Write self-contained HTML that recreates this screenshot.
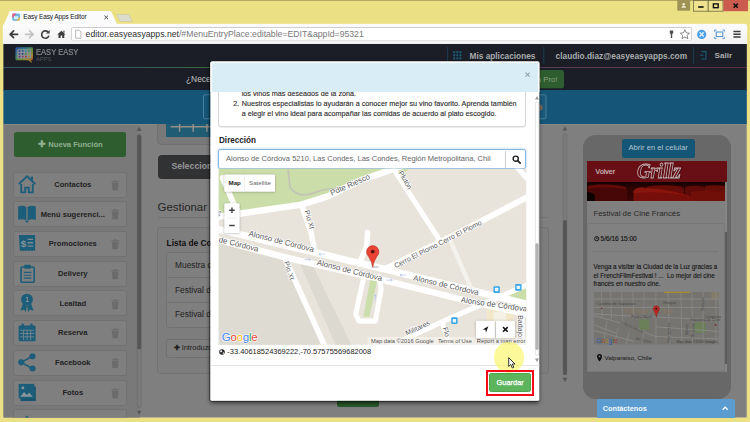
<!DOCTYPE html>
<html lang="es">
<head>
<meta charset="utf-8">
<title>Easy Easy Apps Editor</title>
<style>
*{box-sizing:border-box;margin:0;padding:0}
html,body{width:750px;height:422px;overflow:hidden;background:#ece084;font-family:"Liberation Sans",sans-serif;-webkit-font-smoothing:antialiased}
.abs,#win *{position:absolute}
#win{position:relative;width:750px;height:422px;overflow:hidden;background:#ece084}
#win svg{overflow:visible}
.t{white-space:nowrap;line-height:1}
/* chrome */
#tab{left:9.4px;top:11.4px;width:101.6px;height:13.6px;background:#fbfbfb;border-radius:1.5px 1.5px 0 0}
#tabl{left:3.6px;top:11.4px;width:0;height:0;border-left:6px solid transparent;border-bottom:13.6px solid #fbfbfb}
#tabr{left:110.8px;top:11.4px;width:0;height:0;border-right:6px solid transparent;border-bottom:13.6px solid #fbfbfb}
#toolbar{left:3.4px;top:24.4px;width:743.4px;height:20px;background:linear-gradient(#fcfcfc,#f1f1f1);border-radius:2px 2px 0 0;box-shadow:0 0 0 .6px #f4eaa4}
#url{left:71px;top:27px;width:620.5px;height:14px;background:#fff;border:1px solid #d2d2d2;border-top:1.200px solid #cdcdcd;border-bottom-color:#e4e4e4;border-radius:2px}
#frameL{left:3.4px;top:44px;width:.6px;height:373px;background:#f0e7a0}
#frameR{left:746px;top:44px;width:.6px;height:373px;background:#f0e7a0}
#frameB{left:3.4px;top:417.4px;width:743.2px;height:.6px;background:#f0e7a0}
/* page */
#page{left:0;top:0;width:750px;height:422px;clip-path:inset(44px 3.3px 4.5px 3.5px);background:#7f7f7f}
#hdr1{left:0;top:44px;width:750px;height:23px;background:#1b1e26}
#hdrline{left:0;top:66.500px;width:750px;height:1.300px;background:linear-gradient(90deg,#34586c 0,#34586c 14%,#3a6b3c 28%,#6b6a2a 50%,#5c3c54 72%,#5c3652 86%,#5e2c40 100%)}
#hdr2{left:0;top:67.8px;width:750px;height:23px;background:#1b1e26}
#band{left:0;top:90.2px;width:750px;height:33.4px;background:#155678}
.hd{color:#a9abae;font-weight:bold;font-size:8px}
.sb{left:12.8px;width:114.6px;height:26.1px;background:#7f7f7f;border:1px solid #727272;border-radius:3px}
.sb .t{left:24px;width:70px;text-align:center;top:8.4px;font-size:7.6px;font-weight:bold;color:#222}
.sb .ic{left:3.7px;top:1.1px;width:20px;height:20px}
.sb .tr{left:97.5px;top:7.3px;width:8.4px;height:10.6px}
/* modal */
#modal{left:0;top:0;width:750px;height:422px;clip-path:inset(61.6px 210.6px 21.200px 210.4px round 1.500px);background:#fff}
#mshadow{left:210.4px;top:61.6px;width:329px;height:339.200px;border-radius:2.500px;box-shadow:0 1.500px 4px rgba(0,0,0,.6),0 0 0 .8px rgba(0,0,0,.42)}
#mhead{left:210px;top:61px;width:330px;height:30.7px;background:#d9edf7}
</style>
</head>
<body>
<div id="win">
  <!-- window chrome -->
  <div id="toolbar"></div>
  <div id="tabl"></div><div id="tab"></div><div id="tabr"></div>
  <div id="url"></div>
  <div id="frameL"></div><div id="frameR"></div><div id="frameB"></div>
  
  <div class="abs" style="left:0;top:0;width:750px;height:1px;background:#b5a95f"></div>
  <!-- new tab button -->
  <svg class="abs" style="left:0;top:0" width="750" height="46" viewBox="0 0 750 46">
    <path d="M116.5 14.5 h12.5 l3.5 7 h-12.5 z" fill="#dcdccd" stroke="#c9c49a" stroke-width=".6"/>
    <!-- favicon -->
    <rect x="12.3" y="13.6" width="7.6" height="7.2" rx="1.2" fill="#6fb4e0"/>
    <path d="M12.3 14.8 q0 -1.2 1.2 -1.2 h3 l-4.2 4.6z" fill="#e45c8c"/>
    <path d="M19.9 17 v2.6 q0 1.2 -1.2 1.2 h-2.2z" fill="#f2b53b"/>
    <path d="M14 16.2h4.2v3H14z" fill="#fff" opacity=".75"/>
    <!-- tab close -->
    <path d="M104.4 15.6 l3.6 3.6 M108 15.6 l-3.6 3.6" stroke="#4a4a4a" stroke-width="1" fill="none"/>
    <!-- back -->
    <path d="M17.6 34.3 h-7.4 M13.6 30.9 l-3.5 3.4 l3.5 3.4" stroke="#3c3c3c" stroke-width="1.7" fill="none" stroke-linecap="round" stroke-linejoin="round"/>
    <!-- forward -->
    <path d="M25.6 34.3 h7.4 M29.6 30.9 l3.5 3.4 l-3.5 3.4" stroke="#c3c3c3" stroke-width="1.7" fill="none" stroke-linecap="round" stroke-linejoin="round"/>
    <!-- reload -->
    <path d="M48 32 a3.7 3.7 0 1 0 0.9 3.6" stroke="#3c3c3c" stroke-width="1.6" fill="none"/>
    <path d="M49.6 30 v3.6 h-3.6z" fill="#3c3c3c"/>
    <!-- home -->
    <path d="M57.3 34.6 l4.1 -3.9 l4.1 3.9 h-1.2 v3.4 h-2.1 v-2.4 h-1.6 v2.4 h-2.1 v-3.4z" fill="#3c3c3c"/>
    <rect x="63.4" y="30.7" width="1.1" height="2" fill="#3c3c3c"/>
    <!-- page icon -->
    <path d="M75.6 30.2 h3.6 l1.8 1.8 v6.2 h-5.4z" fill="#fff" stroke="#a7a7a7" stroke-width=".8"/>
    <!-- key -->
    <path d="M669.8 30.6 h3.4 v2.6 l-1 .9 v3.8 h-1.4 v-3.8 l-1 -.9z" fill="#4d4d4d"/>
    <!-- star -->
    <path d="M684.9 29.8 l1.4 3 l3.2 .4 l-2.4 2.2 l.7 3.2 l-2.9 -1.6 l-2.9 1.6 l.7 -3.2 l-2.4 -2.2 l3.2 -.4z" fill="#fff" stroke="#6b6b6b" stroke-width=".8" stroke-linejoin="round"/>
    <!-- blue ext -->
    <circle cx="701.7" cy="34.4" r="4.6" fill="#4a9ee6"/>
    <path d="M699.6 32.3 l4.2 4.2 M703.8 32.3 l-4.2 4.2" stroke="#d9ecfb" stroke-width="1.6"/>
    <!-- capture -->
    <rect x="716.2" y="32" width="6.6" height="4.6" fill="#fff" stroke="#4a8fd0" stroke-width="1"/>
    <path d="M714.6 31.6 v-1.6 h1.8 M722.6 30 h1.8 v1.6 M724.4 37 v1.6 h-1.8 M716.4 38.6 h-1.8 v-1.6" stroke="#4a8fd0" stroke-width=".9" fill="none"/>
    <!-- menu -->
    <path d="M733.4 31.6 h7.2 M733.4 34.3 h7.2 M733.4 37 h7.2" stroke="#3c3c3c" stroke-width="1.5"/>
    <!-- window buttons -->
    <rect x="677.3" y="0" width="12.8" height="10.7" fill="#9d9355"/>
    <circle cx="683.7" cy="4.3" r="1.3" fill="#f1ead0"/>
    <path d="M681.4 7.7 q0 -2 2.3 -2 q2.3 0 2.3 2z" fill="#f1ead0"/>
    <rect x="693.6" y="0.4" width="14.6" height="10.8" fill="#efe28f" stroke="#6f6a3c" stroke-width=".8"/>
    <rect x="708.2" y="0.4" width="14.8" height="10.8" fill="#efe28f" stroke="#6f6a3c" stroke-width=".8"/>
    <rect x="723.4" y="0" width="24.6" height="11.2" fill="#cb5a4f"/>
    <rect x="698.2" y="6.2" width="5.4" height="1.6" fill="#111"/>
    <rect x="713.4" y="3.9" width="4.8" height="3.8" fill="none" stroke="#111" stroke-width="1.4"/>
    <path d="M733.6 3.6 l4.200 4.200 M737.800 3.6 l-4.200 4.200" stroke="#111" stroke-width="1.500"/>
  </svg>
  <div class="abs t" style="left:23.3px;top:13.6px;font-size:6.5px;letter-spacing:-.12px;color:#151515">Easy Easy Apps Editor</div>
  <div class="abs t" style="left:85.6px;top:29.6px;font-size:8.67px;color:#787878"><span style="position:static;color:#2e2e2e">editor.easyeasyapps.net</span>/#MenuEntryPlace:editable=EDIT&amp;appId=95321</div>
  <!--CHROME-->
  <div id="page">
    <div id="hdr1"></div><div id="hdrline"></div><div id="hdr2"></div>

    <!-- header row 1 -->
    <svg class="abs" style="left:0;top:0" width="750" height="125" viewBox="0 0 750 125">
      <defs><linearGradient id="lg" x1="0" y1="0" x2="1" y2="1"><stop offset="0" stop-color="#2f4a9a"/><stop offset=".3" stop-color="#2f7a8a"/><stop offset=".55" stop-color="#5a8a3a"/><stop offset=".8" stop-color="#a08a2a"/><stop offset="1" stop-color="#a0402a"/></linearGradient></defs>
      <rect x="15.400" y="47.300" width="17.600" height="12.900" rx="1.400" fill="url(#lg)"/>
      <path d="M27.600 60 l4.400 3 l-1 -3.200z" fill="#9a7a2a"/>
      <rect x="17.200" y="49.200" width="14" height="9.200" rx=".6" fill="#888c93"/>
      <g>
        <circle cx="19.500" cy="51" r=".9" fill="#27408a"/><circle cx="22.700" cy="51" r=".9" fill="#1f5fa0"/><circle cx="25.900" cy="51" r=".9" fill="#1f8a9a"/><circle cx="29.100" cy="51" r=".9" fill="#2a8a4a"/>
        <circle cx="19.500" cy="53.800" r=".9" fill="#3a2f8a"/><circle cx="22.700" cy="53.800" r=".9" fill="#27408a"/><circle cx="25.900" cy="53.800" r=".9" fill="#3a8a3a"/><circle cx="29.100" cy="53.800" r=".9" fill="#9a9a2a"/>
        <circle cx="19.500" cy="56.600" r=".9" fill="#6a2a8a"/><circle cx="22.700" cy="56.600" r=".9" fill="#9a2a5a"/><circle cx="25.900" cy="56.600" r=".9" fill="#b02a2a"/><circle cx="29.100" cy="56.600" r=".9" fill="#b0802a"/>
      </g>
      <path d="M447.6 47 v17 M543.8 47 v17 M693.4 47 v17" stroke="#1d3b4e" stroke-width="1"/>
      <g fill="#1c5d7a">
        <rect x="453.2" y="51.2" width="2" height="2"/><rect x="456.3" y="51.2" width="2" height="2"/><rect x="459.4" y="51.2" width="2" height="2"/>
        <rect x="453.2" y="54.3" width="2" height="2"/><rect x="456.3" y="54.3" width="2" height="2"/><rect x="459.4" y="54.3" width="2" height="2"/>
        <rect x="453.2" y="57.4" width="2" height="2"/><rect x="456.3" y="57.4" width="2" height="2"/><rect x="459.4" y="57.4" width="2" height="2"/>
      </g>
      <path d="M701.6 51.6 h4.4 v7.4 h-4.4" fill="none" stroke="#1c5d7a" stroke-width="1.1"/>
      <path d="M700 55.3 h3.6" stroke="#1c5d7a" stroke-width="1.1"/>
      <!-- pro button -->
      <rect x="520" y="70" width="44" height="18.2" rx="2.2" fill="#2e5e30"/>
      <!-- band widgets -->
      <rect x="203.5" y="95.5" width="80" height="22" fill="none" stroke="#3f7793" stroke-width="1"/>
      <rect x="500" y="95.5" width="46" height="22" rx="1.5" fill="#1a5a7c" stroke="#3f7793" stroke-width="1"/>
      <circle cx="539.5" cy="106.5" r="3.2" fill="#6a6f74"/>
    </svg>
    <div class="t" style="left:36px;top:48.100px;font-size:8.500px;color:#8b8c8f;-webkit-text-stroke:.2px #8b8c8f;transform:scaleX(.89);transform-origin:0 0">EASY EASY</div>
    <div class="t" style="left:36px;top:57.300px;font-size:5.800px;color:#4e5157">APPS</div>
    <div class="t hd" style="left:469.5px;top:51.7px;font-size:8.3px">Mis aplicaciones</div>
    <div class="t hd" style="left:555.6px;top:51.7px;font-size:8.32px">claudio.diaz@easyeasyapps.com</div>
    <div class="t hd" style="left:714.5px;top:51.7px;font-size:8.1px">Salir</div>
    <div class="t" style="left:186px;top:75.2px;font-size:8.4px;color:#c4c4c4">¿Necesitas más? ¡Pásate a</div>
    <div class="t" style="left:536.700px;top:75.600px;font-size:7.800px;color:#84a07c">a Pro!</div>

    <!-- sidebar -->
    <div style="left:0;top:123.600px;width:140.300px;height:300px;background:#797979"></div>
    <div style="left:0;top:123.500px;width:750px;height:.7px;background:#8c8684"></div>
    <div style="left:13.8px;top:132.2px;width:112.4px;height:24.6px;background:#2e5e30;border-radius:2.5px"></div>
    <div class="t" style="left:38.2px;top:141.2px;font-size:7.6px;font-weight:bold;color:#8fb08f"><span style="position:static;font-size:9px;line-height:0">✚</span> Nueva Función</div>
    <div class="sb" style="top:171.5px"><svg class="ic" viewBox="0 0 17 17"><path d="M1.5 8.6 L8.5 2 L15.5 8.6" fill="none" stroke="#1c5d7a" stroke-width="1.7"/><path d="M3.6 8.4 v7.2 h3.4 v-4 h3 v4 h3.4 v-7.2" fill="none" stroke="#1c5d7a" stroke-width="1.6"/><rect x="11.6" y="2.2" width="2" height="3.4" fill="#1c5d7a"/></svg><div class="t">Contactos</div><svg class="tr" viewBox="0 0 8 10"><path d="M.9 2.7 h6.2 l-.5 7 h-5.2z" fill="#6b6b6b"/><rect x=".3" y="1.2" width="7.4" height="1.1" fill="#6b6b6b"/><rect x="2.8" y=".2" width="2.4" height="1.2" fill="#6b6b6b"/></svg></div>
    <div class="sb" style="top:201.2px"><svg class="ic" viewBox="0 0 17 17"><path d="M1 3 q3.6 -1.6 7 0.4 v11.4 q-3.4 -1.8 -7 -0.4z M16 3 q-3.6 -1.6 -7 0.4 v11.4 q3.4 -1.8 7 -0.4z" fill="#1c5d7a"/><path d="M6.6 15 l1.9 2 l1.9 -2z" fill="#1c5d7a"/></svg><div class="t">Menú sugerenci...</div><svg class="tr" viewBox="0 0 8 10"><path d="M.9 2.7 h6.2 l-.5 7 h-5.2z" fill="#6b6b6b"/><rect x=".3" y="1.2" width="7.4" height="1.1" fill="#6b6b6b"/><rect x="2.8" y=".2" width="2.4" height="1.2" fill="#6b6b6b"/></svg></div>
    <div class="sb" style="top:231.0px"><svg class="ic" viewBox="0 0 17 17"><path d="M1.6 1.6 h13.8 v14 l-1.3 -1 l-1.3 1 l-1.3 -1 l-1.3 1 l-1.3 -1 l-1.3 1 l-1.3 -1 l-1.3 1 l-1.3 -1 l-1.2 1z" fill="#1c5d7a"/><path d="M9 5.4 h4.6 M9 8.3 h4.6 M9 11.2 h4.6" stroke="#7e8a90" stroke-width="1.1"/><text x="5.6" y="11.6" font-size="8.4" font-weight="bold" fill="#8a959a" text-anchor="middle" font-family="Liberation Sans,sans-serif" style="position:static">$</text></svg><div class="t">Promociones</div><svg class="tr" viewBox="0 0 8 10"><path d="M.9 2.7 h6.2 l-.5 7 h-5.2z" fill="#6b6b6b"/><rect x=".3" y="1.2" width="7.4" height="1.1" fill="#6b6b6b"/><rect x="2.8" y=".2" width="2.4" height="1.2" fill="#6b6b6b"/></svg></div>
    <div class="sb" style="top:260.7px"><svg class="ic" viewBox="0 0 17 17"><rect x="3.4" y="3.4" width="11.2" height="13" rx="1.2" fill="none" stroke="#1c5d7a" stroke-width="1.4"/><rect x="6.2" y="1.4" width="5.6" height="3.4" rx=".8" fill="#1c5d7a"/><path d="M5.8 8 h6.4 M5.8 10.4 h6.4 M5.8 12.8 h6.4" stroke="#1c5d7a" stroke-width="1"/></svg><div class="t">Delivery</div><svg class="tr" viewBox="0 0 8 10"><path d="M.9 2.7 h6.2 l-.5 7 h-5.2z" fill="#6b6b6b"/><rect x=".3" y="1.2" width="7.4" height="1.1" fill="#6b6b6b"/><rect x="2.8" y=".2" width="2.4" height="1.2" fill="#6b6b6b"/></svg></div>
    <div class="sb" style="top:290.4px"><svg class="ic" viewBox="0 0 17 17"><circle cx="8.5" cy="6.4" r="5" fill="#1c5d7a"/><path d="M5 10 l-2 6 l3 -1.2 l1.4 2.2 l1.1 -5z M12 10 l2 6 l-3 -1.2 l-1.4 2.2 l-1.1 -5z" fill="#1c5d7a"/><text x="8.5" y="8.6" font-size="5.6" font-weight="bold" fill="#88959b" text-anchor="middle" font-family="Liberation Sans,sans-serif" style="position:static">1</text></svg><div class="t">Lealtad</div><svg class="tr" viewBox="0 0 8 10"><path d="M.9 2.7 h6.2 l-.5 7 h-5.2z" fill="#6b6b6b"/><rect x=".3" y="1.2" width="7.4" height="1.1" fill="#6b6b6b"/><rect x="2.8" y=".2" width="2.4" height="1.2" fill="#6b6b6b"/></svg></div>
    <div class="sb" style="top:320.1px"><svg class="ic" viewBox="0 0 17 17"><rect x="1.4" y="3" width="14.4" height="13.4" rx="1" fill="#1c5d7a"/><rect x="4" y="1.2" width="1.8" height="3.4" rx=".6" fill="#1c5d7a"/><rect x="11.4" y="1.2" width="1.8" height="3.4" rx=".6" fill="#1c5d7a"/><path d="M2.6 7 h12 M2.6 9.8 h12 M2.6 12.6 h12 M5.6 7 v8.4 M8.6 7 v8.4 M11.6 7 v8.4" stroke="#7b8a91" stroke-width=".7"/></svg><div class="t">Reserva</div><svg class="tr" viewBox="0 0 8 10"><path d="M.9 2.7 h6.2 l-.5 7 h-5.2z" fill="#6b6b6b"/><rect x=".3" y="1.2" width="7.4" height="1.1" fill="#6b6b6b"/><rect x="2.8" y=".2" width="2.4" height="1.2" fill="#6b6b6b"/></svg></div>
    <div class="sb" style="top:349.9px"><svg class="ic" viewBox="0 0 17 17"><circle cx="3.6" cy="8.8" r="2.6" fill="#1c5d7a"/><circle cx="13.2" cy="3.6" r="2.6" fill="#1c5d7a"/><circle cx="13.2" cy="14" r="2.6" fill="#1c5d7a"/><path d="M3.6 8.8 L13.2 3.6 M3.6 8.8 L13.2 14" stroke="#1c5d7a" stroke-width="1.4"/></svg><div class="t">Facebook</div><svg class="tr" viewBox="0 0 8 10"><path d="M.9 2.7 h6.2 l-.5 7 h-5.2z" fill="#6b6b6b"/><rect x=".3" y="1.2" width="7.4" height="1.1" fill="#6b6b6b"/><rect x="2.8" y=".2" width="2.4" height="1.2" fill="#6b6b6b"/></svg></div>
    <div class="sb" style="top:379.6px"><svg class="ic" viewBox="0 0 17 17"><rect x="3" y="3.8" width="13" height="12.4" fill="#1a5570"/><rect x="1.4" y="1.6" width="13.4" height="12.4" fill="#1c5d7a"/><path d="M2.8 12.6 l3.2 -4.2 l2.4 2.6 l2 -1.8 l3 3.4z" fill="#88969c"/><circle cx="5" cy="5" r="1.2" fill="#88969c"/></svg><div class="t">Fotos</div><svg class="tr" viewBox="0 0 8 10"><path d="M.9 2.7 h6.2 l-.5 7 h-5.2z" fill="#6b6b6b"/><rect x=".3" y="1.2" width="7.4" height="1.1" fill="#6b6b6b"/><rect x="2.8" y=".2" width="2.4" height="1.2" fill="#6b6b6b"/></svg></div>
    <div class="sb" style="top:409.3px"><svg class="ic" viewBox="0 0 17 17"><path d="M5 8 L8.500 4.800 L12 8" fill="none" stroke="#1c5d7a" stroke-width="1.400"/></svg><svg class="tr" viewBox="0 0 8 10"><path d="M.9 2.7 h6.2 l-.5 7 h-5.2z" fill="#6b6b6b"/><rect x=".3" y="1.2" width="7.4" height="1.1" fill="#6b6b6b"/><rect x="2.8" y=".2" width="2.4" height="1.2" fill="#6b6b6b"/></svg></div>

    <!-- sidebar scrollbar -->
    <svg class="abs" style="left:0;top:0" width="750" height="422" viewBox="0 0 750 422">
      <path d="M136.700 131 l2.500 -4.200 l2.500 4.200z M136.900 410.800 l2.300 4 l2.300 -4z" fill="#585858"/>
      <rect x="137.300" y="134.600" width="3.800" height="273" rx="1.900" fill="#7c7c7c" stroke="#6a6a6a" stroke-width=".7"/>
      <rect x="137.300" y="134.600" width="3.800" height="214.800" rx="1.900" fill="#555"/>
      <path d="M562.400 130.600 l2.500 -4.200 l2.500 4.200z M562.400 377.800 l2.500 4.200 l2.500 -4.200z" fill="#585858"/>
      <rect x="563.100" y="133.800" width="3.700" height="241.200" rx="1.850" fill="#7c7c7c" stroke="#6a6a6a" stroke-width=".7"/>
      <rect x="563.100" y="220" width="3.700" height="155" rx="1.850" fill="#555"/>
    </svg>

    <!-- center -->
    <div style="left:157px;top:110px;width:370px;height:35.400px;background:#797979;border:1px solid #717171;border-radius:4.500px"></div>
    <div style="left:166px;top:118px;width:120px;height:18.700px;background:#205c74"></div>
    <svg class="abs" style="left:0;top:0" width="750" height="422" viewBox="0 0 750 422"><path d="M170.600 126.800 H300 M179.600 123 v8.800 M193.200 123 v8.800 M206.900 123 v8.800" stroke="#968e8b" stroke-width="1.500" fill="none"/></svg>
    <div id="band"></div>
    <svg class="abs" style="left:0;top:0" width="750" height="125" viewBox="0 0 750 125"><rect x="203.500" y="94.800" width="80" height="24" rx="1.200" fill="none" stroke="#4a7f99" stroke-width="1"/><rect x="500" y="94.800" width="46" height="24" rx="1.200" fill="#1a5a7c" stroke="#4a7f99" stroke-width="1"/><circle cx="539.500" cy="107.600" r="3.200" fill="#7a665c"/></svg>
    <div style="left:158px;top:154.5px;width:150px;height:24px;background:#313234;border-radius:4px"></div>
    <div class="t" style="left:171.4px;top:162.4px;font-size:8.8px;font-weight:bold;color:#979797">Selecciona un elemento</div>
    <div class="t" style="left:157.600px;top:202.100px;font-size:11.400px;color:#262626">Gestionar elementos</div>
    <div style="left:158px;top:216.500px;width:390px;height:1px;background:#747474"></div>
    <div style="left:156.800px;top:226.900px;width:391.800px;height:147.600px;background:#7d7d7d;border:1px solid #737373;border-radius:3px"></div>
    <div class="t" style="left:166.600px;top:239.300px;font-size:8.400px;font-weight:bold;color:#111">Lista de Contenidos</div>
    <div style="left:166.200px;top:251.800px;width:374px;height:76.200px;background:#7f7f7f;border:1px solid #727272;border-radius:3px"></div>
    <div style="left:166.200px;top:277.200px;width:374px;height:1px;background:#727272"></div>
    <div style="left:166.200px;top:301.800px;width:374px;height:1px;background:#727272"></div>
    <div class="t" style="left:175px;top:260.6px;font-size:8.4px;color:#1e1e1e">Muestra de Vinos</div>
    <div class="t" style="left:175px;top:285.500px;font-size:8.400px;color:#1e1e1e">Festival de Cine</div>
    <div class="t" style="left:175px;top:310.200px;font-size:8.400px;color:#1e1e1e">Festival de Jazz</div>
    <div style="left:166.400px;top:338.600px;width:110px;height:19.200px;background:#7f7f7f;border:1px solid #707070;border-radius:2.5px"></div>
    <div class="t" style="left:173.600px;top:344.400px;font-size:7.400px;color:#1c1c1c"><b style="position:static">✚</b> Introduzca nuevo</div>
    <div style="left:337.3px;top:384px;width:42px;height:23px;background:#2a5a2c;border-radius:2.5px"></div>

    <!-- phone -->
    <div style="left:582.6px;top:134.6px;width:148.4px;height:264px;background:#686868;border-radius:12.5px"></div>
    <div style="left:621.8px;top:139px;width:73px;height:18.8px;background:#155676;border-radius:2.5px"></div>
    <div class="t" style="left:628.4px;top:144.4px;font-size:7.65px;color:#b3c4ce">Abrir en el celular</div>
    <div style="left:586.6px;top:161px;width:140.6px;height:211.4px;background:#808080"></div>
    <div style="left:586.6px;top:161px;width:140.6px;height:21.4px;background:#680f16"></div>
    <div class="t" style="left:595.6px;top:168.4px;font-size:7px;color:#cdb9bb;-webkit-text-stroke:.2px #cdb9bb">Volver</div>
    <div class="t" style="left:636.6px;top:160.8px;font-size:20.5px;font-family:'Liberation Serif',serif;font-style:italic;font-weight:bold;color:#6a1018;-webkit-text-stroke:.8px #c9babc;letter-spacing:-.2px;text-shadow:.8px .8px 0 #2a0508;transform:scaleX(.93);transform-origin:0 0">Grillz</div>
    <div style="left:586.6px;top:182.2px;width:138.2px;height:19px;background:linear-gradient(180deg,#140202 0,#2c0404 30%,#3a0606 100%)"></div>
    <svg class="abs" style="left:586.6px;top:182.6px;overflow:hidden" width="138.2" height="18.6" viewBox="0 0 138.2 18.6">
      <path d="M60 3.500 q16 -2.500 34 0 q3 1 3 4 v4 h-37z" fill="#640c08"/>
      <path d="M98 4 q8 -2 18 -.5 q4 1 4 4 v8 h-22z" fill="#5e0b08"/>
      <path d="M118 3 q8 -1.500 20.200 0 v12 h-20.200z" fill="#660d08"/>
      <path d="M104 9 q14 -2.500 34.200 .5 v9.100 h-34.200z" fill="#700f08"/>
      <path d="M1 3 q18 -3 36 .5 q3 1 3 4.500 v10.600 h-39z" fill="#480707"/>
      <path d="M1 3 q18 -3 36 .5 q2 .7 2.600 2.500 q-19 -3 -38.600 -.2z" fill="#620b09"/>
      <path d="M0 9 q6 0 8 4 v5.600 h-8z" fill="#0e0202"/>
      <path d="M46.500 8 q2 -3.500 8 -3.500 q30 2 50 9 q3 1.500 4 5.100 h-62z" fill="#760f09"/>
      <path d="M46.500 8 q2 -3.500 8 -3.500 q30 2 50 9 q-28 -6 -58 -3.500z" fill="#8a150c"/>
    </svg>
    <div class="t" style="left:593.4px;top:209.6px;font-size:7.85px;color:#282828">Festival de Cine Francés</div>
    <div style="left:587.4px;top:223px;width:137.6px;height:149.4px;background:#818181;border:1px solid #787878;border-radius:2px"></div>
    <svg class="abs" style="left:594.4px;top:236.4px" width="5.4" height="5.4" viewBox="0 0 10 10"><circle cx="5" cy="5" r="4" fill="none" stroke="#111" stroke-width="1.7"/><path d="M5 2.6 v2.6 h2.2" fill="none" stroke="#111" stroke-width="1.3"/></svg>
    <div class="t" style="left:600.6px;top:235.8px;font-size:6.5px;color:#141414;-webkit-text-stroke:.15px #141414">5/6/16 15:00</div>
    <div style="left:593.4px;top:251.4px;width:125px;height:1px;background:#777"></div>
    <div class="t" style="left:593.6px;top:262.8px;font-size:6.28px;color:#151515;line-height:8.85px;-webkit-text-stroke:.12px #151515">Venga a visitar la Ciudad de la Luz gracias a<br>el FrenchFilmFestival ! ...&nbsp; Lo mejor del cine<br>francés en nuestro cine.</div>
    <svg class="abs" style="left:593.5px;top:292px" width="124.8" height="52.4" viewBox="30 22 675 283" preserveAspectRatio="none" font-family="Liberation Sans,sans-serif">
      <rect x="30" y="22" width="675" height="283" fill="#767471"/>
      <rect x="275" y="170" width="54" height="56" fill="#6b8058"/>
      <rect x="575" y="184" width="58" height="58" fill="#6b8058"/>
      <rect x="665" y="22" width="40" height="40" fill="#837c66"/>
      <g stroke="#8a8a88" fill="none">
        <path d="M30 60 H705 M30 105 H705 M30 140 L230 152 L705 172 M30 150 L200 196 L360 262 L705 275 M30 230 L250 290 M30 200 L150 245 M360 210 L705 235" stroke-width="5"/>
        <path d="M365 22 V305 M430 22 L440 305 M500 22 L505 305 M560 22 L562 305 M620 22 V305 M690 22 V305 M300 22 V170 M240 22 L245 150 M180 22 L185 190 M120 22 L125 170 M70 22 L75 160 M100 180 L80 305 M160 215 L140 305 M220 240 L205 305 M300 226 L290 305" stroke-width="4"/>
      </g>
      <path d="M410 24 H550" stroke="#a38f2c" stroke-width="7" fill="none"/>
      <g fill="#4a4844" font-size="20.500">
        <text x="48" y="92">Catedral de Valparaíso</text>
        <text x="404" y="88">Hungay</text>
        <text x="232" y="165">Pedro Montt</text>
        <text x="628" y="160">Congreso</text>
        <text x="554" y="181">Nacional de Chile</text>
        <text transform="translate(172 190) rotate(24)">Independencia</text>
        <text transform="translate(254 278) rotate(14)">Av. Colón</text>
        <text transform="translate(442 296) rotate(-90)">San Ignacio</text>
        <text transform="translate(536 252) rotate(-90)">Morris</text>
        <text transform="translate(572 268) rotate(-90)">Uruguay</text>
        <text transform="translate(626 122) rotate(-90)">Rawson</text>
      </g>
      <text x="192" y="137" font-size="35" fill="#8f7a56" letter-spacing="10.500">Valparaíso</text>
      <path d="M72 104 l6 10 h-12z" fill="#6a3030"/>
      <circle cx="688" cy="200" r="5" fill="#6a3030"/>
      <path d="M367 160 Q364 140 354 124 A17 17 0 1 1 380 124 Q370 140 367 160z" fill="#b32a24" stroke="#7a1814" stroke-width="1.500"/>
      <circle cx="367" cy="112" r="5.500" fill="#4a0e0c"/>
      <text x="42" y="298" font-size="36" letter-spacing="-.5"><tspan fill="#2f5fa8">G</tspan><tspan fill="#a13a30">o</tspan><tspan fill="#a98a20">o</tspan><tspan fill="#2f5fa8">g</tspan><tspan fill="#357a45">l</tspan><tspan fill="#a13a30">e</tspan></text>
      <text x="476" y="300" font-size="20" fill="#3c3c3c">Map data ©2016 Google</text>
    </svg>
    <svg class="abs" style="left:597px;top:354.4px" width="5" height="7.6" viewBox="0 0 10 15"><path d="M5 0 a5 5 0 0 1 5 5 q0 3.4 -5 10 q-5 -6.600 -5 -10 a5 5 0 0 1 5 -5z" fill="#0c0c0c"/><circle cx="5" cy="5" r="2" fill="#7f7f7f"/></svg>
    <div class="t" style="left:604.4px;top:355.2px;font-size:6.25px;color:#151515;letter-spacing:.05px">Valparaiso, Chile</div>
    <div style="left:724.6px;top:201px;width:2.600px;height:171px;background:#868686"></div>
    <div style="left:724.6px;top:232px;width:2.600px;height:132px;background:#5c5c5c"></div>
    <!--PAGE-->
  </div>
  <div id="mshadow"></div>
  <div id="modal">

    <!-- description box -->
    <div style="left:218.4px;top:70px;width:307.4px;height:56.600px;border:1px solid #d6d6d6;border-radius:3px;box-shadow:0 .5px 1px rgba(0,0,0,.08);background:#fff"></div>
    <div class="t" style="left:241.7px;top:89.3px;font-size:7.22px;color:#2c2c2c;line-height:9.7px;-webkit-text-stroke:.12px #2c2c2c">los vinos más deseados de la zona.<br>Nuestros especialistas lo ayudarán a conocer mejor su vino favorito. Aprenda también<br>a elegir el vino ideal para acompañar las comidas de acuerdo al plato escogido.</div>
    <div class="t" style="left:233.3px;top:99px;font-size:7.22px;color:#2c2c2c;line-height:9.7px;-webkit-text-stroke:.12px #2c2c2c">2.</div>
    <div style="left:210px;top:61px;width:330px;height:30.800px;background:#fff"></div>
    <div id="mhead2" style="left:211.700px;top:63px;width:326.700px;height:28.800px;background:#d9edf7"></div>
    <svg class="abs" style="left:525.300px;top:72.100px" width="5.200" height="5.200" viewBox="0 0 6 6"><path d="M.6 .6 L5.400 5.400 M5.400 .6 L.6 5.400" stroke="#8fa3b0" stroke-width="1.200"/></svg>
    <div class="t" style="left:219px;top:137px;font-size:8.150px;font-weight:bold;color:#222">Dirección</div>
    <div style="left:218.2px;top:149.400px;width:307.800px;height:19.200px;border:1px solid #86b4e3;border-radius:2.200px;background:#fff;box-shadow:0 0 2.500px rgba(102,175,233,.7)"></div>
    <div style="left:505.200px;top:150.600px;width:1px;height:17.200px;background:#ccc"></div>
    <div class="t" style="left:226px;top:155.300px;font-size:7.540px;color:#666">Alonso de Córdova 5210, Las Condes, Las Condes, Región Metropolitana, Chil</div>
    <svg class="abs" style="left:511.600px;top:155px" width="9" height="9" viewBox="0 0 9 9"><circle cx="3.700" cy="3.700" r="2.600" fill="none" stroke="#222" stroke-width="1.400"/><path d="M5.600 5.600 L8.200 8.200" stroke="#222" stroke-width="1.700" stroke-linecap="round"/></svg>

    <svg class="abs" style="left:214px;top:165px" width="320" height="180" viewBox="0 0 750 422">
      <defs><clipPath id="mc"><rect x="11" y="8.500" width="721" height="413"/></clipPath></defs>
      <g clip-path="url(#mc)" font-family="Liberation Sans,sans-serif">
        <rect x="0" y="0" width="750" height="422" fill="#e8e4dc"/>
        <!-- darker land lower-left -->
        <path d="M0 170 L165 218 L262 422 L0 422z" fill="#dedbd3"/>
        <path d="M200 228 L232 236 L322 422 L285 422z" fill="#dcd9d0"/>
        <!-- park -->
        <path d="M0 0 H430 L400 14 L345 34 L268 72 L205 92 L0 124z" fill="#cbdda9"/>
        <path d="M400 14 L432 0 H470 L445 18 L425 22z" fill="#cbdda9"/>
        <path d="M680 300 L732 286 V318 L700 322z" fill="#cbdda9"/>
        <rect x="640" y="335" width="62" height="40" fill="#f1e8c9"/>
        <rect x="655" y="345" width="30" height="22" fill="#f5f1e4"/>
        <!-- park path -->
        <path d="M172 0 Q176 30 178 52 Q196 78 232 66 Q262 54 292 56" fill="none" stroke="#c3c3b6" stroke-width="4"/>
        <!-- roads -->
        <g fill="none" stroke="#fff" stroke-linecap="round" stroke-linejoin="round">
          <path d="M-10 124 L205 93 L268 73 L345 35 L425 8 L470 -8" stroke-width="15"/>
          <path d="M20 30 L50 100 L62 115" stroke-width="13"/>
          <path d="M205 93 L228 160 L236 205" stroke-width="13"/>
          <path d="M-10 146 L236 205 L400 244 L620 298 L760 332" stroke-width="16"/>
          <path d="M-10 170 L165 216 L380 266 L600 320 L760 356" stroke-width="15"/>
          <path d="M165 216 L262 430" stroke-width="13"/>
          <path d="M420 8 L526 172" stroke-width="12"/>
          <path d="M400 244 L560 166 L760 62" stroke-width="14"/>
          <path d="M700 -6 L745 44" stroke-width="12"/>
          <path d="M360 158 L358 190 L340 232" stroke-width="13"/>
          <path d="M386 262 L392 290 L378 366 L340 366 L332 350 L352 258" stroke-width="12"/>
          <path d="M400 430 L560 356 L700 296" stroke-width="12"/>
          <path d="M535 370 L555 430" stroke-width="11"/>
          <path d="M722 330 L722 430" stroke-width="12"/>
          <path d="M700 296 L760 270" stroke-width="12"/>
          <path d="M575 250 L590 200 L560 166" stroke-width="0"/>
        </g>
        <path d="M552 172 L604 292" fill="none" stroke="#f4f2ec" stroke-width="10"/>
        <!-- median green -->
        <path d="M366 270 L382 272 L364 356 L350 356z" fill="#cbdda9"/>
        <!-- little arrows -->
        <g stroke="#a9c0e6" stroke-width="1.6" fill="none">
          <path d="M246 209 h14 M246 209 l4 -3 M246 209 l4 3"/>
          <path d="M212 222 h14 M226 222 l-4 -3 M226 222 l-4 3"/>
          <path d="M436 258 h14 M436 258 l4 -3 M436 258 l4 3"/>
          <path d="M404 270 h14 M418 270 l-4 -3 M418 270 l-4 3"/>
          <path d="M378 304 v14 M378 304 l-3 4 M378 304 l3 4"/>
        </g>
        <!-- transit icons -->
        <g>
          <rect x="655" y="284" width="15" height="16" rx="3" fill="#35a6e8"/><rect x="658.500" y="288" width="8" height="8" rx="1" fill="#e8f4fc"/>
          <rect x="706" y="279" width="15" height="16" rx="3" fill="#35a6e8"/><rect x="709.500" y="283" width="8" height="8" rx="1" fill="#e8f4fc"/>
          <rect x="556" y="357" width="15" height="16" rx="3" fill="#35a6e8"/><rect x="559.500" y="361" width="8" height="8" rx="1" fill="#e8f4fc"/>
        </g>
        <!-- labels -->
        <g font-size="18.500" fill="#5c5c5c" stroke="#fff" stroke-width="3" paint-order="stroke" style="paint-order:stroke">
          <text transform="translate(276 72) rotate(-24)">Pdte Riesco</text>
          <text transform="translate(212 108) rotate(74)" font-size="16.500">Pío XI</text>
          <text transform="translate(164 228) rotate(72)" font-size="16.500">Pío XI</text>
          <text transform="translate(432 18) rotate(60)" font-size="16.500">Plutón</text>
          <text transform="translate(80 166) rotate(14)">Alonso de Córdova</text>
          <text transform="translate(-24 172) rotate(14)">nso de Córdova</text>
          <text transform="translate(240 234) rotate(14)">Alonso de Córdova</text>
          <text transform="translate(466 270) rotate(13)">Alonso de Córdova</text>
          <text transform="translate(578 322) rotate(8)">Alonso de Córdova</text>
          <text transform="translate(426 242) rotate(-27)" font-size="16.500">Cerro El Plomo Cerro El Plomo</text>
          <text transform="translate(452 400) rotate(-25)" font-size="16.500">Militares</text>
          <text transform="translate(536 382) rotate(74)" font-size="16.500">Flo</text>
          <text transform="translate(712 352) rotate(90)" font-size="16.500">Badajoz</text>
          <text transform="translate(12 122) rotate(-70)" font-size="14">es</text>
        </g>
        <!-- bottom attribution -->
        <rect x="360" y="403" width="372" height="19" fill="#f5f3ee" opacity=".75"/>
        <g font-size="13.500" fill="#555">
          <text x="368" y="417">Map data ©2016 Google</text>
          <text x="525" y="417">Terms of Use</text>
          <text x="616" y="417">Report a map error</text>
        </g>
        <!-- google logo -->
        <g font-size="27" stroke="#fff" stroke-width="2.500" style="paint-order:stroke" letter-spacing="-.5">
          <text x="18" y="413"><tspan fill="#4285f4">G</tspan><tspan fill="#ea4335">o</tspan><tspan fill="#fbbc05">o</tspan><tspan fill="#4285f4">g</tspan><tspan fill="#34a853">l</tspan><tspan fill="#ea4335">e</tspan></text>
        </g>
        <!-- controls -->
        <g>
          <rect x="24" y="22" width="119" height="41" rx="2" fill="#fff" style="filter:drop-shadow(0 1px 2px rgba(0,0,0,.3))"/>
          <path d="M71.500 22 v41" stroke="#e6e6e6" stroke-width="1.500"/>
          <text x="34" y="48" font-size="14.500" font-weight="bold" fill="#222">Map</text>
          <text x="82" y="48" font-size="14.500" fill="#666">Satellite</text>
          <rect x="24" y="89.500" width="36" height="70" rx="2" fill="#fff" style="filter:drop-shadow(0 1px 2px rgba(0,0,0,.3))"/>
          <path d="M30 124.500 h24" stroke="#e6e6e6" stroke-width="1.500"/>
          <path d="M35.500 106 h13 M42 99.500 v13 M35.500 142 h13" stroke="#444" stroke-width="3.400"/>
          <rect x="614" y="365" width="45" height="41" rx="2" fill="#fff" style="filter:drop-shadow(0 1px 2px rgba(0,0,0,.3))"/>
          <rect x="660.500" y="365" width="45" height="41" rx="2" fill="#fff" style="filter:drop-shadow(0 1px 2px rgba(0,0,0,.3))"/>
          <path d="M643 378 L630 385.500 L636.500 386.500 L637.500 393z" fill="#111"/>
          <path d="M677.500 380 l11 11 M688.500 380 l-11 11" stroke="#111" stroke-width="3.600"/>
        </g>
        <!-- marker -->
        <ellipse cx="378" cy="239" rx="9" ry="3" fill="#000" opacity=".15"/>
        <path d="M372 240 Q370 226 362 214 A14.500 14.500 0 1 1 382 214 Q374 226 372 240z" fill="#ea4335" stroke="#b3261e" stroke-width="1.200"/>
        <circle cx="372" cy="203" r="4.600" fill="#5c1410"/>
      </g>
    </svg>

    <svg class="abs" style="left:219.400px;top:349px" width="6" height="6" viewBox="0 0 10 10"><circle cx="5" cy="5" r="4.600" fill="#222"/><path d="M2 3 q2 -1.500 3.500 0 q.5 1.500 -1 2 q-1.500 1.500 -2.500 -.5z M6.500 5.500 q1.500 -.5 2 1 q-1 2 -2.500 1.500z" fill="#fff"/></svg>
    <div class="t" style="left:227.300px;top:348.300px;font-size:7.460px;color:#222">-33.40618524369222,-70.57575569682008</div>
    <div style="left:210px;top:364.800px;width:330px;height:1px;background:#e5e5e5"></div>
    <!-- scrollbar -->
    <svg class="abs" style="left:0;top:0" width="750" height="422" viewBox="0 0 750 422">
      <path d="M535 99.400 l2 -3.400 l2 3.400z M535 358.600 l2 3.400 l2 -3.400z" fill="#9a9a9a"/>
      <rect x="535.300" y="101.600" width="3.400" height="254" rx="1.700" fill="#fff" stroke="#d0d0d0" stroke-width=".6"/>
      <rect x="535.300" y="243" width="3.400" height="107" rx="1.700" fill="#b4b4b4"/>
    </svg>
    <!-- cursor highlight -->
    <div style="left:494px;top:342.400px;width:30.400px;height:30.400px;border-radius:50%;background:rgba(250,246,110,.7)"></div>
    <!-- save button -->
    <div style="left:486.400px;top:369.600px;width:47.800px;height:26.300px;border:2.200px solid #f20d16"></div>
    <div style="left:489.400px;top:373px;width:42px;height:19.200px;background:#5cb45c;border:.6px solid #4ca44c;border-radius:2.200px"></div>
    <div class="t" style="left:496.600px;top:378.800px;font-size:7.400px;color:#fff;-webkit-text-stroke:.25px #fff">Guardar</div>
    <svg class="abs" style="left:508.200px;top:357.400px" width="8" height="12" viewBox="0 0 8 12"><path d="M.7 .7 V9.400 L2.800 7.500 L4.300 11 L5.800 10.300 L4.300 7 L7 7z" fill="#fff" stroke="#222" stroke-width=".9" stroke-linejoin="round"/></svg>
    <!--MODAL-->
  </div>

  <div class="abs" style="left:597.3px;top:399.100px;width:137.600px;height:18.500px;background:#5b9dd0;border-radius:2.500px 2.500px 0 0"></div>
  <div class="abs t" style="left:602.800px;top:404.900px;font-size:7.250px;font-weight:bold;color:#f6fafd">Contáctenos</div>
  <svg class="abs" style="left:722px;top:406.200px" width="6.400" height="4.400" viewBox="0 0 6.4 4.4"><path d="M.7 3.7 L3.2 1.100 L5.7 3.700" fill="none" stroke="#fff" stroke-width="1.3"/></svg>
  <!--OVER-->
</div>
</body>
</html>
